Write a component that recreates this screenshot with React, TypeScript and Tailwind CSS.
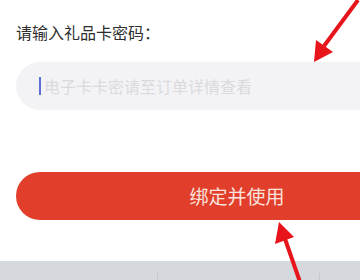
export default function App() {
  return (
    <div
      className="relative h-[280px] w-[360px] overflow-hidden bg-white"
      style={{ fontFamily: '"Noto Sans CJK SC", "Noto Sans", sans-serif' }}
    >
      <div className="flex h-[261px] flex-col pl-4">
        <div className="mt-[20px] text-[16px] leading-[24px] text-[#2e2e2e]">请输入礼品卡密码：</div>
        <div className="mt-[18px] flex h-[48px] w-[420px] items-center rounded-l-[24px] bg-[#f3f3f5] pl-[23px]">
          <span className="h-[18px] w-[2px] bg-[#5d6fd6]" />
          <span className="ml-[3px] text-[16px] text-[#dadade]">电子卡卡密请至订单详情查看</span>
        </div>
        <button className="mt-[62px] flex h-[48px] w-[442px] items-center justify-center rounded-full bg-[#e13f2c] text-[19px] text-[#fbe3dd]">
          绑定并使用
        </button>
      </div>
      <div className="flex h-[19px] bg-[#d5d8dc]">
        <div className="mt-[12px] w-[158px] border-r border-[#c4c7cb]" />
        <div className="mt-[12px] w-[162px] border-r border-[#c4c7cb]" />
      </div>
      <svg className="absolute left-0 top-0" width="360" height="280" viewBox="0 0 360 280">
        <line x1="358" y1="0" x2="324" y2="46" stroke="#e8141c" strokeWidth="4" />
        <polygon points="314,62 316,40 333,52" fill="#e8141c" />
        <line x1="300" y1="282" x2="284" y2="236" stroke="#e8141c" strokeWidth="4" />
        <polygon points="279,222 275,244 294,237" fill="#e8141c" />
      </svg>
    </div>
  )
}
